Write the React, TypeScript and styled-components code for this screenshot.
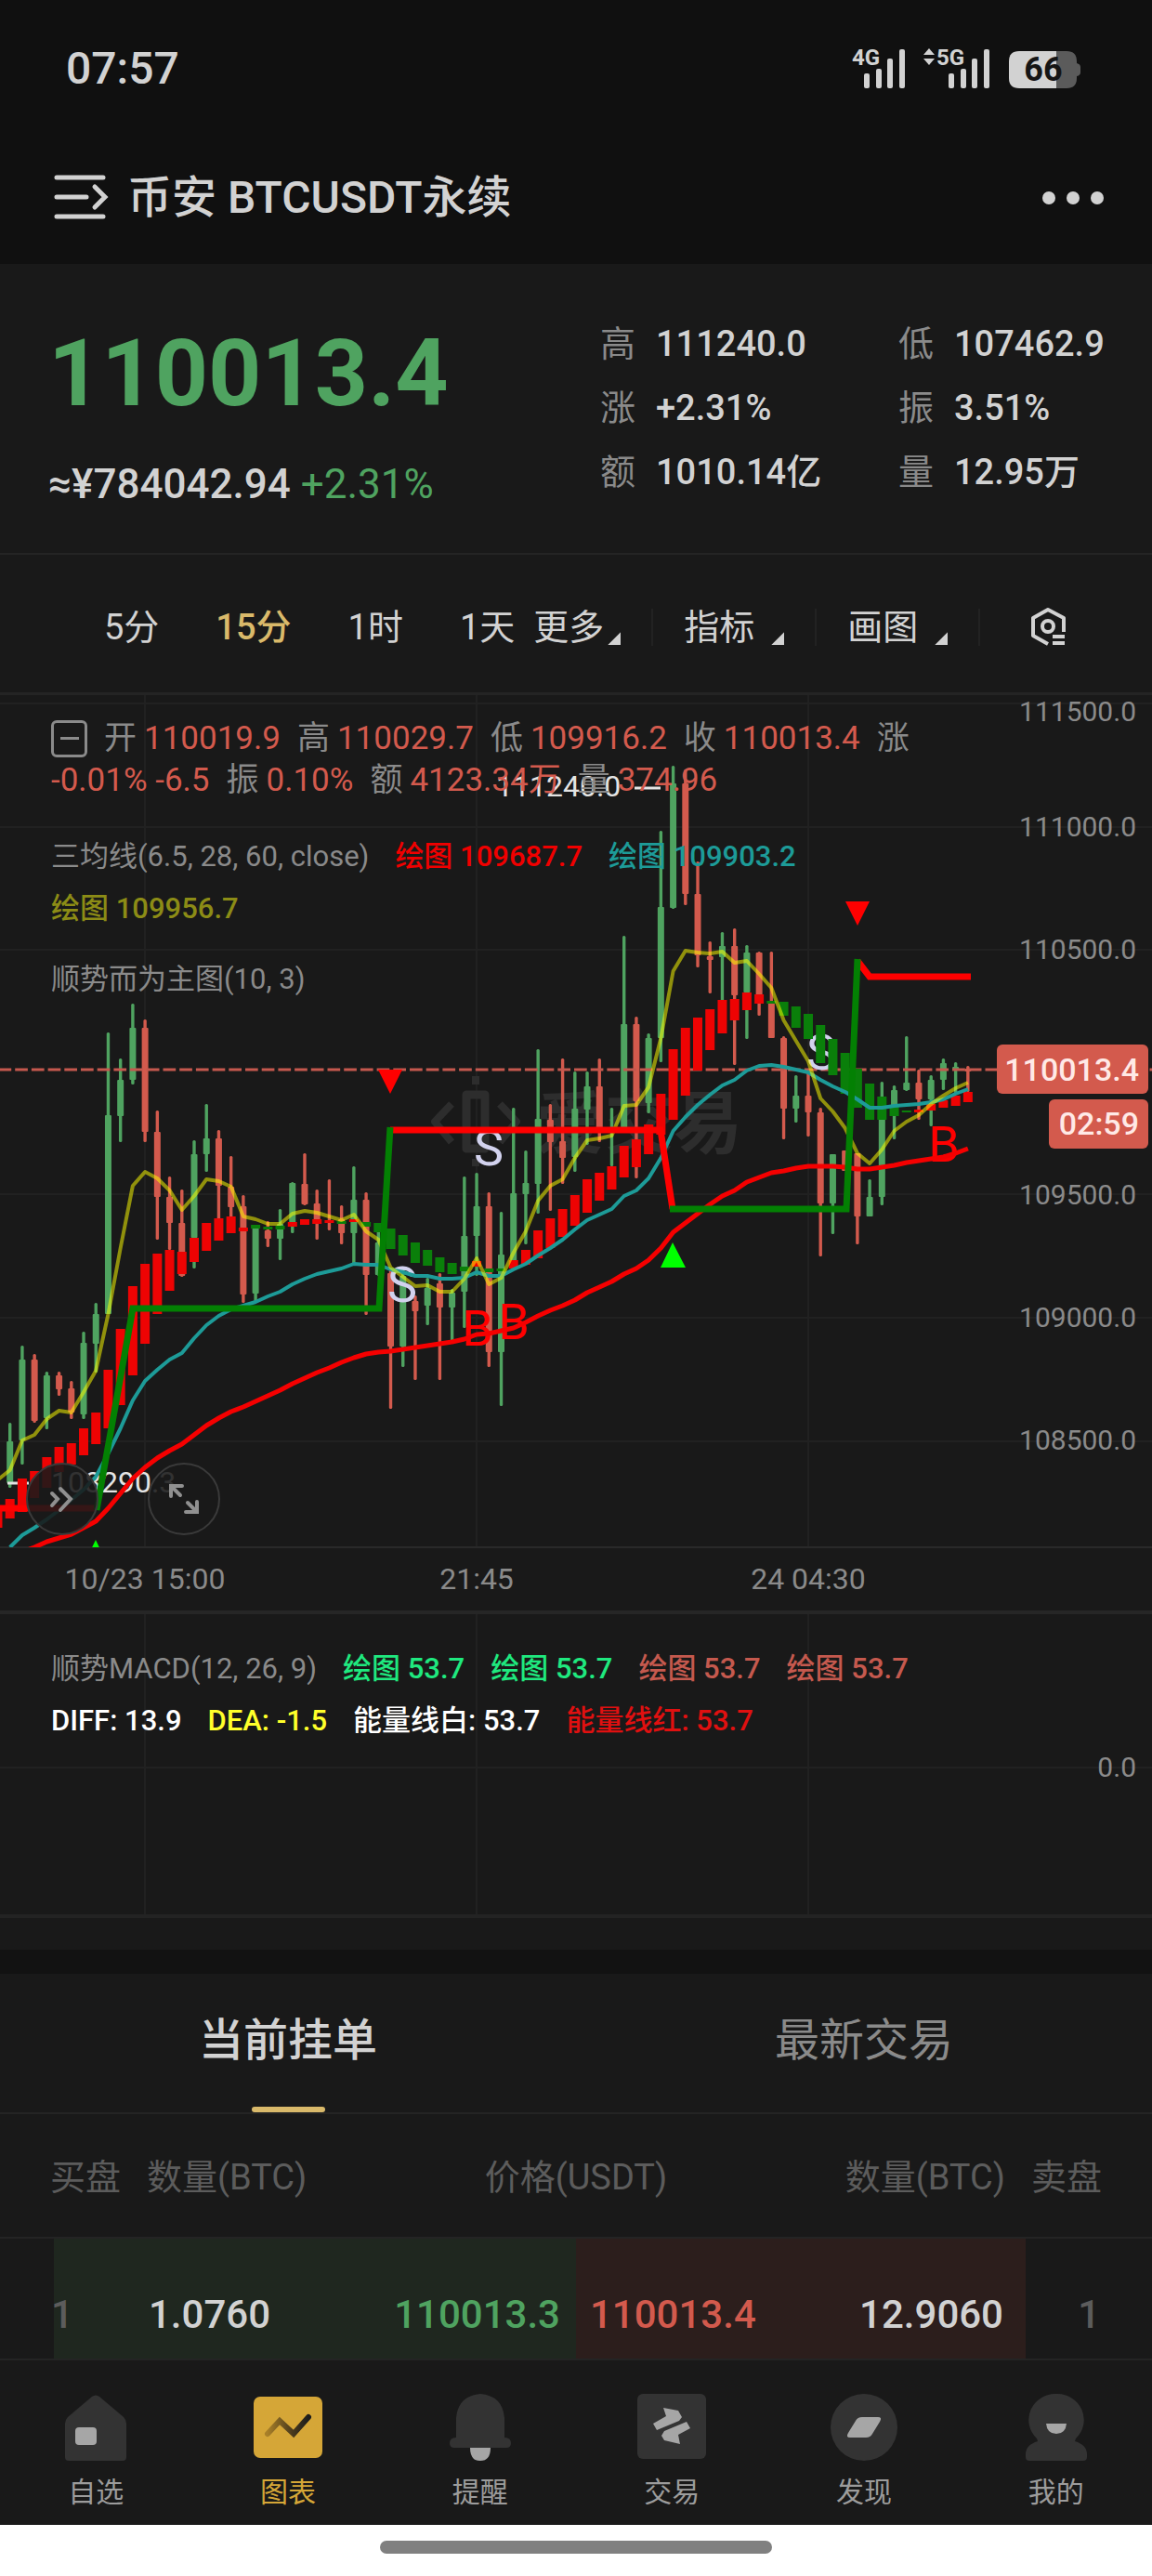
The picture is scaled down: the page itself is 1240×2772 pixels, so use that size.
import React from 'react';
import styled, { createGlobalStyle } from 'styled-components';

const FONT = `Roboto, "Noto Sans CJK SC", sans-serif`;

const C = {
  header: '#101010',
  bg: '#191919',
  strip: '#121212',
  line: '#242424',
  text: '#d2d2d2',
  muted: '#8a8a8a',
  dim: '#5c5c5c',
  up: '#4fa360',
  down: '#d35a4d',
  gold: '#d9b96a',
  teal: '#1d9b98',
  olive: '#8c8c16',
};

const GlobalStyle = createGlobalStyle`
  *, *::before, *::after { box-sizing: border-box; }
  body { margin: 0; background: ${C.bg}; color: ${C.text}; font-family: ${FONT}; }
  button { border: 0; padding: 0; background: none; color: inherit; font: inherit; cursor: pointer; }
  svg { display: block; }
`;

const Page = styled.div`
  display: flex;
  flex-direction: column;
`;

/* ---------- status bar and title ---------- */

const TopArea = styled.header`
  background: ${C.header};
`;

const StatusBar = styled.div`
  display: flex;
  align-items: center;
  justify-content: space-between;
  height: 148px;
  padding: 0 76px 0 71px;
`;

const Clock = styled.time`
  font-size: 48px;
  line-height: 56px;
  font-weight: 500;
`;

const TitleBar = styled.div`
  display: flex;
  align-items: center;
  height: 136px;
  padding: 0 52px 6px 57px;
`;

const Title = styled.h1`
  flex: 1;
  margin: 0 0 0 20px;
  font-size: 48px;
  line-height: 56px;
  font-weight: 500;
`;

/* ---------- ticker ---------- */

const Ticker = styled.section`
  display: grid;
  grid-template-columns: 594px 1fr;
  padding: 52px 52px 44px 52px;
  border-bottom: 2px solid ${C.line};
`;

const LastPrice = styled.div`
  font-size: 100px;
  line-height: 132px;
  font-weight: 700;
  color: ${C.up};
`;

const Converted = styled.div`
  margin-top: 23px;
  font-size: 44px;
  line-height: 60px;
  font-weight: 500;
  white-space: nowrap;
`;

const Up = styled.span`
  color: ${C.up};
  font-weight: 400;
`;

const Stats = styled.dl`
  display: grid;
  grid-template-columns: 321px 1fr;
  align-content: start;
  margin: 0;
  font-size: 38px;
  line-height: 69px;
  white-space: nowrap;
`;

const Stat = styled.div`
  display: flex;
  gap: 22px;
  dt { color: ${C.muted}; }
  dd { margin: 0; font-weight: 500; }
`;

/* ---------- toolbar ---------- */

const Toolbar = styled.nav`
  display: flex;
  align-items: center;
  height: 151px;
  padding: 8px 0 0 112px;
  border-bottom: 3px solid ${C.line};
  font-size: 38px;
  line-height: 56px;
`;

const Intervals = styled.div`
  display: flex;
  gap: 61px;
  margin-right: 20px;
`;

const Interval = styled.button<{ $active?: boolean }>`
  color: ${p => (p.$active ? C.gold : 'inherit')};
  font-weight: ${p => (p.$active ? 500 : 400)};
`;

const MenuButton = styled.button<{ $gap: number }>`
  display: flex;
  align-items: center;
  gap: ${p => p.$gap}px;
`;

const Corner = styled.i`
  width: 14px;
  height: 14px;
  margin-top: 24px;
  background: currentColor;
  clip-path: polygon(100% 0, 100% 100%, 0 100%);
`;

const ToolDivider = styled.i`
  width: 2px;
  height: 40px;
  margin: 0 33px;
  background: #222;
`;

const SettingsButton = styled.button`
  margin-left: 20px;
`;

/* ---------- charts ---------- */

const ChartPanel = styled.section`
  position: relative;
  svg { width: 100%; height: auto; }
`;

const Overlay = styled.div`
  position: absolute;
  top: 24px;
  left: 55px;
  max-width: 960px;
`;

const Ohlc = styled.div`
  display: flex;
  align-items: center;
  column-gap: 18px;
  font-size: 35px;
  line-height: 45px;
  white-space: nowrap;
  color: ${C.down};
  span span { color: ${C.muted}; margin-right: 8px; }
`;

const Collapse = styled.button`
  width: 39px;
  height: 40px;
  border: 3px solid ${C.muted};
  border-radius: 6px;
  display: flex;
  align-items: center;
  justify-content: center;
  &::before { content: ''; width: 20px; height: 3px; background: ${C.muted}; }
`;

const Legend = styled.div<{ $top: number }>`
  display: flex;
  flex-wrap: wrap;
  column-gap: 28px;
  margin-top: ${p => p.$top}px;
  font-size: 31px;
  line-height: 56px;
`;

const Tint = styled.span<{ $c: string; $w?: number }>`
  color: ${p => p.$c};
  font-weight: ${p => p.$w ?? 400};
  white-space: nowrap;
`;

const RoundButton = styled.button<{ $left: number }>`
  position: absolute;
  top: 826px;
  left: ${p => p.$left}px;
  width: 78px;
  height: 78px;
  display: grid;
  place-items: center;
  border: 2px solid #3a3a3a;
  border-radius: 50%;
  background: rgba(25, 25, 25, 0.88);
  svg { width: 40px; height: 40px; }
`;

const MacdPanel = styled(ChartPanel)`
  border-top: 4px solid #262626;
  padding-bottom: 34px;
`;

/* ---------- order book ---------- */

const OrderBook = styled.section`
  border-top: 26px solid ${C.strip};
`;

const Tabs = styled.div`
  display: grid;
  grid-template-columns: 1fr 1fr;
  border-bottom: 2px solid ${C.line};
`;

const Tab = styled.button<{ $active?: boolean }>`
  display: flex;
  flex-direction: column;
  align-items: center;
  justify-content: space-between;
  height: 149px;
  padding-top: 43px;
  font-size: 48px;
  line-height: 58px;
  font-weight: ${p => (p.$active ? 500 : 400)};
  color: ${p => (p.$active ? C.text : C.muted)};
  &::after {
    content: '';
    width: 79px;
    height: 6px;
    border-radius: 3px;
    background: ${p => (p.$active ? C.gold : 'transparent')};
  }
`;

const Book = styled.table`
  width: 100%;
  border-collapse: collapse;
  table-layout: fixed;
  text-align: left;
  th, td { padding: 0; white-space: nowrap; }
  th {
    height: 133px;
    padding-top: 4px;
    border-bottom: 2px solid ${C.line};
    font-size: 38px;
    line-height: 56px;
    font-weight: 400;
    color: ${C.dim};
  }
  td {
    height: 131px;
    padding-top: 34px;
    border-bottom: 2px solid ${C.line};
    font-size: 42px;
    line-height: 56px;
    font-weight: 500;
  }
`;

const Edge = styled.col`width: 158px;`;

const Cell = styled.td<{ $c?: string; $align?: string; $l?: number; $r?: number }>`
  && {
    color: ${p => p.$c ?? C.text};
    text-align: ${p => p.$align ?? 'left'};
    padding-left: ${p => p.$l ?? 0}px;
    padding-right: ${p => p.$r ?? 0}px;
  }
`;

const Head = styled(Cell).attrs({ as: 'th' })``;

const DepthRow = styled.tr<{ $bid: number; $ask: number }>`
  background: linear-gradient(
    90deg,
    transparent ${p => 50 - p.$bid}%,
    #1f271f ${p => 50 - p.$bid}% 50%,
    #2c1e1c 50% ${p => 50 + p.$ask}%,
    transparent ${p => 50 + p.$ask}%
  );
`;

/* ---------- bottom navigation ---------- */

const BottomNav = styled.nav`
  display: grid;
  grid-template-columns: repeat(6, 1fr);
  height: 177px;
  background: ${C.bg};
`;

const NavItem = styled.a<{ $active?: boolean }>`
  display: flex;
  flex-direction: column;
  align-items: center;
  gap: 12px;
  padding-top: 36px;
  font-size: 30px;
  line-height: 44px;
  text-decoration: none;
  color: ${p => (p.$active ? '#d5a637' : '#9c9c9c')};
`;

const HomeBar = styled.footer`
  height: 56px;
  padding-top: 17px;
  background: #fff;
  &::before {
    content: '';
    display: block;
    width: 34%;
    height: 14px;
    margin: 0 auto;
    border-radius: 7px;
    background: #808080;
  }
`;

/* ---------- chart data ---------- */

const STEP = 13.22;
const xAt = (i: number) => 10.7 + STEP * i;

type Candle = [dir: 'g' | 'r', high: number, top: number, bottom: number, low: number];

const CANDLES: Candle[] = [
  ['g', 1531, 1551, 1596, 1601], ['g', 1448, 1463, 1550, 1576], ['r', 1457, 1463, 1529, 1531],
  ['g', 1476, 1480, 1526, 1538], ['r', 1476, 1480, 1495, 1502], ['r', 1486, 1494, 1520, 1527],
  ['g', 1433, 1445, 1522, 1527], ['g', 1402, 1414, 1446, 1477], ['g', 1111, 1200, 1414, 1414],
  ['g', 1139, 1162, 1201, 1229], ['g', 1080, 1106, 1162, 1167], ['r', 1097, 1106, 1218, 1229],
  ['r', 1195, 1218, 1288, 1334], ['r', 1266, 1288, 1316, 1345], ['r', 1280, 1316, 1373, 1374],
  ['g', 1227, 1242, 1332, 1365], ['g', 1188, 1225, 1242, 1261], ['r', 1216, 1225, 1276, 1333],
  ['r', 1244, 1277, 1299, 1327], ['r', 1286, 1298, 1393, 1402], ['g', 1318, 1321, 1392, 1402],
  ['r', 1314, 1324, 1333, 1342], ['g', 1301, 1317, 1333, 1356], ['g', 1272, 1273, 1316, 1327],
  ['r', 1241, 1274, 1296, 1297], ['r', 1280, 1295, 1315, 1334], ['r', 1269, 1313, 1315, 1324],
  ['r', 1297, 1312, 1327, 1339], ['g', 1255, 1291, 1327, 1362], ['r', 1283, 1291, 1372, 1415],
  ['g', 1320, 1337, 1372, 1373], ['r', 1365, 1370, 1449, 1516], ['g', 1365, 1373, 1449, 1471],
  ['r', 1394, 1400, 1411, 1485], ['g', 1375, 1386, 1405, 1426], ['r', 1370, 1381, 1407, 1485],
  ['g', 1387, 1391, 1407, 1443], ['g', 1266, 1330, 1390, 1429], ['g', 1262, 1298, 1330, 1373],
  ['r', 1283, 1298, 1455, 1471], ['g', 1304, 1350, 1455, 1513], ['g', 1192, 1284, 1359, 1359],
  ['g', 1238, 1273, 1285, 1339], ['g', 1129, 1204, 1274, 1306], ['r', 1188, 1205, 1229, 1303],
  ['r', 1139, 1228, 1246, 1274], ['g', 1153, 1193, 1245, 1261], ['g', 1153, 1169, 1194, 1232],
  ['r', 1139, 1169, 1215, 1229], ['g', 1192, 1213, 1219, 1255], ['g', 1007, 1102, 1215, 1216],
  ['r', 1094, 1102, 1185, 1268], ['g', 1112, 1117, 1187, 1198], ['g', 894, 976, 1117, 1143],
  ['g', 824, 843, 977, 978], ['r', 828, 843, 962, 974], ['r', 927, 962, 1028, 1041],
  ['r', 1013, 1029, 1033, 1069], ['g', 1003, 1018, 1030, 1077], ['r', 999, 1018, 1071, 1146],
  ['g', 1017, 1025, 1068, 1118], ['r', 1024, 1025, 1080, 1093], ['r', 1024, 1078, 1117, 1117],
  ['r', 1115, 1117, 1193, 1226], ['g', 1157, 1179, 1193, 1208], ['r', 1153, 1179, 1197, 1223],
  ['r', 1192, 1197, 1295, 1352], ['g', 1242, 1242, 1295, 1328], ['r', 1238, 1238, 1260, 1260],
  ['r', 1241, 1241, 1309, 1339], ['g', 1269, 1288, 1309, 1309], ['g', 1164, 1180, 1288, 1297],
  ['g', 1168, 1173, 1198, 1226], ['g', 1115, 1165, 1173, 1174], ['r', 1151, 1165, 1183, 1205],
  ['g', 1157, 1162, 1183, 1212], ['g', 1139, 1144, 1162, 1173], ['g', 1143, 1148, 1152, 1177],
  ['r', 1147, 1150, 1153, 1175],
];

/* Trend ribbon, first entry sits one step left of the first candle. */
const RIBBON: ['g' | 'r', number, number][] = [
  ['r', 1623, 1644], ['r', 1613, 1634], ['r', 1591, 1627], ['r', 1583, 1612], ['r', 1568, 1601],
  ['r', 1557, 1584], ['r', 1553, 1576], ['r', 1537, 1566], ['r', 1520, 1554], ['r', 1474, 1537],
  ['r', 1430, 1512], ['r', 1384, 1480], ['r', 1360, 1446], ['r', 1349, 1414], ['r', 1345, 1389],
  ['r', 1347, 1371], ['r', 1332, 1358], ['r', 1316, 1346], ['r', 1311, 1335], ['r', 1309, 1327],
  ['r', 1321, 1325], ['g', 1318, 1322], ['g', 1320, 1323], ['g', 1319, 1323], ['r', 1315, 1320],
  ['r', 1312, 1318], ['r', 1312, 1317], ['r', 1313, 1316], ['g', 1314, 1317], ['r', 1312, 1315],
  ['g', 1315, 1320], ['g', 1316, 1326], ['g', 1322, 1344], ['g', 1329, 1351], ['g', 1337, 1359],
  ['g', 1345, 1362], ['g', 1353, 1369], ['g', 1359, 1371], ['g', 1363, 1368], ['r', 1357, 1363],
  ['g', 1365, 1369], ['g', 1365, 1368], ['r', 1356, 1365], ['r', 1345, 1361], ['r', 1324, 1354],
  ['r', 1311, 1343], ['r', 1301, 1331], ['r', 1286, 1319], ['r', 1269, 1305], ['r', 1262, 1292],
  ['r', 1255, 1280], ['r', 1233, 1267], ['r', 1226, 1256], ['r', 1210, 1242], ['r', 1177, 1221],
  ['r', 1129, 1205], ['r', 1106, 1179], ['r', 1095, 1152], ['r', 1086, 1130], ['r', 1076, 1112],
  ['r', 1075, 1098], ['r', 1068, 1087], ['r', 1070, 1080], ['g', 1077, 1080], ['g', 1078, 1093],
  ['g', 1083, 1106], ['g', 1091, 1118], ['g', 1103, 1144], ['g', 1118, 1157], ['g', 1133, 1177],
  ['g', 1150, 1192], ['g', 1166, 1205], ['g', 1180, 1205], ['g', 1189, 1201], ['g', 1195, 1197],
  ['r', 1194, 1197], ['r', 1188, 1195], ['r', 1184, 1192], ['r', 1179, 1190], ['r', 1175, 1186],
];

const FAST = [
  1582, 1550, 1544, 1527, 1518, 1520, 1498, 1475, 1414, 1343, 1276, 1261, 1268, 1281, 1302, 1287,
  1269, 1271, 1277, 1309, 1312, 1317, 1317, 1306, 1303, 1305, 1309, 1313, 1307, 1325, 1334, 1364,
  1374, 1384, 1383, 1390, 1390, 1376, 1354, 1382, 1375, 1348, 1325, 1292, 1276, 1269, 1246, 1227,
  1225, 1222, 1190, 1189, 1170, 1117, 1045, 1023, 1025, 1026, 1024, 1036, 1034, 1048, 1063, 1098,
  1120, 1142, 1182, 1196, 1214, 1241, 1252, 1237, 1217, 1207, 1200, 1188, 1179, 1171, 1165,
];

const MID = [
  1665, 1652, 1644, 1635, 1625, 1614, 1603, 1589, 1564, 1537, 1507, 1486, 1474, 1463, 1456, 1440,
  1426, 1416, 1409, 1405, 1401, 1395, 1390, 1382, 1376, 1371, 1368, 1365, 1360, 1361, 1361, 1366,
  1369, 1373, 1373, 1376, 1376, 1375, 1369, 1373, 1373, 1366, 1360, 1351, 1343, 1334, 1323, 1313,
  1307, 1301, 1287, 1281, 1268, 1246, 1217, 1202, 1189, 1178, 1168, 1162, 1152, 1147, 1146, 1148,
  1151, 1154, 1162, 1169, 1175, 1183, 1192, 1192, 1190, 1189, 1188, 1186, 1183, 1177, 1172,
];

const SLOW = [
  1676, 1670, 1665, 1659, 1655, 1651, 1644, 1637, 1623, 1607, 1591, 1579, 1569, 1561, 1554, 1544,
  1534, 1526, 1519, 1514, 1508, 1502, 1496, 1489, 1483, 1477, 1472, 1466, 1461, 1457, 1455, 1454,
  1452, 1450, 1448, 1446, 1444, 1441, 1436, 1435, 1432, 1429, 1423, 1416, 1410, 1405, 1399, 1391,
  1385, 1379, 1371, 1365, 1356, 1343, 1326, 1316, 1306, 1296, 1287, 1281, 1272, 1267, 1262, 1260,
  1257, 1255, 1255, 1255, 1256, 1258, 1258, 1256, 1254, 1251, 1249, 1247, 1245, 1241, 1236,
];

const points = (ys: number[]) => ys.map((y, i) => `${xAt(i).toFixed(1)},${y}`).join(' ');

const GRID_X = [156, 513, 870];
const PRICE_TICKS: [string, number, number][] = [
  ['111500.0', 757, 765], ['111000.0', 890, 889], ['110500.0', 1022, 1021],
  ['109500.0', 1285, 1285], ['109000.0', 1418, 1417], ['108500.0', 1551, 1549],
];
const TIME_TICKS = ['10/23 15:00', '21:45', '24 04:30'];
const SIGNALS: [string, number, number][] = [
  ['S', 526, 1254], ['S', 433, 1401], ['S', 884, 1151],
  ['B', 514, 1448], ['B', 553, 1441], ['B', 1016, 1250],
];

function PriceChart() {
  return (
    <svg viewBox="0 748 1240 985" fontFamily={FONT} role="img" aria-label="BTCUSDT 15分 K线图">
      <defs>
        <clipPath id="plot"><rect x="0" y="748" width="1240" height="917" /></clipPath>
      </defs>
      <g stroke="#212121" strokeWidth="2">
        {PRICE_TICKS.map(([t, y]) => <line key={t} x1="0" x2="1240" y1={y} y2={y} />)}
        {GRID_X.map(x => <line key={x} x1={x} x2={x} y1="748" y2="1665" />)}
        <line x1="0" x2="1240" y1="1665" y2="1665" stroke="#292929" />
      </g>

      <g stroke="#2d2d2d" strokeWidth="8" fill="none" strokeLinejoin="round">
        <path d="M486 1188 L468 1207 L486 1229 M538 1188 L556 1207 L538 1229" />
        <path d="M502 1236 V1178 H522 V1236 Z" strokeWidth="9" />
        <path d="M512 1158 V1167 M512 1247 V1255" />
      </g>
      <text x="577" y="1235" fontSize="74" fontWeight="700" fill="#2d2d2d">爱交易</text>

      <g clipPath="url(#plot)">
        {CANDLES.map(([dir, high, top, bottom, low], i) => {
          const fill = dir === 'g' ? C.up : C.down;
          return (
            <g key={i} fill={fill}>
              <rect x={xAt(i) - 1.7} y={high} width="3.4" height={low - high} rx="1.5" />
              <rect x={xAt(i) - 3.5} y={top} width="7" height={Math.max(2, bottom - top)} rx="1" />
            </g>
          );
        })}
        <line x1="0" x2="1240" y1="1151" y2="1151" stroke="#c5584e" strokeWidth="3" strokeDasharray="13.7 4" strokeDashoffset="1.5" />
        <g fontSize="54" textAnchor="middle">
          {SIGNALS.map(([t, x, y]) => <text key={x} x={x} y={y} fill={t === 'S' ? '#d2d2ee' : '#f00'}>{t}</text>)}
        </g>
        <g fontSize="32" fill="#e4e4e4">
          <text x="534" y="857">111240.0</text>
          <text x="55" y="1606">108290.3</text>
          <path d="M683 848 H711 M8 1596 H31" stroke="#e4e4e4" strokeWidth="3" />
        </g>
        {RIBBON.map(([dir, top, bottom], i) => (
          <rect key={i} x={xAt(i - 1) - 5} y={top} width="10" height={bottom - top} fill={dir === 'g' ? '#0a7f0a' : '#ee0303'} />
        ))}
        <g fill="none" strokeLinejoin="round">
          <polyline points={points(MID)} stroke={C.teal} strokeWidth="4" />
          <polyline points={'-2,1592 ' + points(FAST)} stroke="#ff0" strokeOpacity="0.52" strokeWidth="4" />
          <polyline points={points(SLOW)} stroke="#f50000" strokeWidth="5" />
        </g>
        <g fill="none" strokeWidth="7">
          <polyline points="0,1623 103,1623" stroke="#f00" />
          <polyline points="420,1216 711,1216 724,1301" stroke="#f00" />
          <polyline points="923,1034 936,1051 1045,1051" stroke="#f00" />
          <polyline points="104,1625 143,1408 408,1408 420,1213" stroke="#038003" />
          <polyline points="721,1301 911,1301 923,1032" stroke="#038003" />
        </g>
        <path d="M407 1151 H433 L420 1177 Z M910 970 H936 L923 996 Z" fill="#f00" />
        <path d="M711 1364 H738 L724 1337 Z M90 1684 H116 L103 1657 Z" fill="#0f0" />
      </g>

      <g fontSize="30" fill={C.muted} textAnchor="end">
        {PRICE_TICKS.map(([t, , y]) => <text key={t} x="1223" y={y + 11}>{t}</text>)}
      </g>
      <g fontSize="32" fill={C.muted} textAnchor="middle">
        {TIME_TICKS.map((t, i) => <text key={t} x={GRID_X[i]} y="1710">{t}</text>)}
      </g>
      <g fill={C.down}>
        <rect x="1073" y="1124" width="163" height="53" rx="6" />
        <rect x="1129" y="1183" width="107" height="53" rx="6" />
      </g>
      <g fontSize="34" fontWeight="500" fill="#ffe9e6" textAnchor="end">
        <text x="1226" y="1163">110013.4</text>
        <text x="1226" y="1221">02:59</text>
      </g>
    </svg>
  );
}

function MacdChart() {
  return (
    <svg viewBox="0 1737 1240 327" fontFamily={FONT} role="img" aria-label="顺势MACD">
      <g stroke="#212121" strokeWidth="2">
        <line x1="0" x2="1240" y1="1902" y2="1902" />
        {GRID_X.map(x => <line key={x} x1={x} x2={x} y1="1737" y2="2060" />)}
        <line x1="0" x2="1240" y1="2062" y2="2062" stroke="#232323" strokeWidth="4" />
      </g>
      <text x="1223" y="1912" fontSize="30" fill={C.muted} textAnchor="end">0.0</text>
    </svg>
  );
}

/* ---------- icons ---------- */

const bars = (x: number) => [0, 13, 25, 38].map((d, i) => (
  <rect key={d} x={x + d} y={[28, 23, 12, 2][i]} width="6" height={[16, 21, 32, 42][i]} rx="2" />
));

function StatusIcons() {
  return (
    <svg width="247" height="62" viewBox="0 -8 247 62" fill={C.text} fontFamily={FONT}>
      <g fontSize="24" fontWeight="700">
        <text x="0" y="19">4G</text>
        <text x="91" y="19">5G</text>
      </g>
      {bars(13)}
      {bars(104)}
      <path d="M83 1 L89 8 H77 Z M83 19 L89 12 H77 Z" />
      <path d="M180 4 H220 V44 H180 Q169 44 169 33 V15 Q169 4 180 4 Z" />
      <path d="M220 4 H231 Q242 4 242 15 V17 Q246 18 246 21 V27 Q246 30 242 31 V33 Q242 44 231 44 H220 Z" fill="#5b5b5b" />
      <text x="206" y="36" fontSize="36" fontWeight="700" fill="#151515" textAnchor="middle">66</text>
    </svg>
  );
}

const MenuIcon = () => (
  <svg width="60" height="50" viewBox="0 0 60 50" fill="none" stroke={C.text} strokeWidth="5" strokeLinecap="round">
    <path d="M4 3 H54 M4 24 H36 M4 45 H54 M45 13 L56 24 L45 35" />
  </svg>
);

const DotsIcon = () => (
  <svg width="66" height="16" viewBox="0 0 66 16" fill={C.text}>
    <circle cx="7" cy="8" r="7" /><circle cx="33" cy="8" r="7" /><circle cx="59" cy="8" r="7" />
  </svg>
);

const HexIcon = () => (
  <svg width="42" height="44" viewBox="0 0 42 44" fill="none" stroke={C.text} strokeWidth="4">
    <path d="M37 27 V12 L20 3 L4 12 V31 L20 40" strokeLinejoin="round" />
    <circle cx="20" cy="21" r="6" />
    <path d="M25 32 H38 M25 39 H38" />
  </svg>
);

const ICON_BG = '#333';
const ICON_FG = '#a6a6a6';

const NAV: { label: string; active?: boolean; icon: React.ReactNode }[] = [
  {
    label: '自选',
    icon: <>
      <path d="M5 32 Q5 28 8 25 L34 3 Q38 0 42 3 L68 25 Q71 28 71 32 V68 Q71 72 67 72 H9 Q5 72 5 68 Z" fill={ICON_BG} />
      <rect x="16" y="36" width="23" height="19" rx="4" fill={ICON_FG} />
    </>,
  },
  {
    label: '图表',
    active: true,
    icon: <>
      <defs>
        <linearGradient id="trend" x1="0" x2="1">
          <stop offset="0" stopColor="#a87f28" /><stop offset="0.6" stopColor="#4a3a1c" /><stop offset="1" stopColor="#1c1c1c" />
        </linearGradient>
      </defs>
      <rect x="1" y="3" width="74" height="66" rx="7" fill="#d5a637" />
      <path d="M16 43 L29 29 L44 43 L60 25" fill="none" stroke="url(#trend)" strokeWidth="6" strokeLinecap="round" />
    </>,
  },
  {
    label: '提醒',
    icon: <>
      <path d="M12 47 V26 Q14 2 38 0 Q62 2 64 26 V47 Q71 47 71 53 Q71 58 66 58 H10 Q5 58 5 53 Q5 47 12 47 Z" fill={ICON_BG} />
      <path d="M27 58 H49 Q49 72 38 72 Q27 72 27 58 Z" fill={ICON_FG} />
    </>,
  },
  {
    label: '交易',
    icon: <>
      <rect x="1" y="0" width="74" height="70" rx="6" fill={ICON_BG} />
      <path d="M22 39 L18 32 L32 24 L29 15 L45 18 L49 25 L46 29 Z M54 30 L58 37 L45 44 L47 54 L30 50 L27 45 L30 40 Z" fill={ICON_FG} />
    </>,
  },
  {
    label: '发现',
    icon: <>
      <circle cx="38" cy="36" r="36" fill={ICON_BG} />
      <path d="M36 25 H53 Q58 25 55 30 L47 43 Q45 47 40 47 H23 Q18 47 21 42 L29 29 Q31 25 36 25 Z" fill={ICON_FG} />
    </>,
  },
  {
    label: '我的',
    icon: <>
      <path d="M38 0 A29 28 0 0 1 59 48 L58 51 Q71 55 71 65 V68 Q71 72 67 72 H9 Q5 72 5 68 V65 Q5 55 18 51 L17 48 A29 28 0 0 1 38 0 Z" fill={ICON_BG} />
      <path d="M27 32 H49 Q48 43 38 43 Q28 43 27 32 Z" fill={ICON_FG} />
    </>,
  },
];

const STATS = [
  ['高', '111240.0'], ['低', '107462.9'],
  ['涨', '+2.31%'], ['振', '3.51%'],
  ['额', '1010.14亿'], ['量', '12.95万'],
];

export default function App() {
  return (
    <Page>
      <GlobalStyle />
      <TopArea>
        <StatusBar>
          <Clock>07:57</Clock>
          <StatusIcons />
        </StatusBar>
        <TitleBar>
          <button aria-label="菜单"><MenuIcon /></button>
          <Title>币安 BTCUSDT永续</Title>
          <button aria-label="更多"><DotsIcon /></button>
        </TitleBar>
      </TopArea>

      <Ticker>
        <div>
          <LastPrice>110013.4</LastPrice>
          <Converted>≈¥784042.94 <Up>+2.31%</Up></Converted>
        </div>
        <Stats>
          {STATS.map(([k, v]) => <Stat key={k}><dt>{k}</dt><dd>{v}</dd></Stat>)}
        </Stats>
      </Ticker>

      <Toolbar>
        <Intervals>
          <Interval>5分</Interval>
          <Interval $active>15分</Interval>
          <Interval>1时</Interval>
          <Interval>1天</Interval>
        </Intervals>
        <MenuButton $gap={4}>更多<Corner /></MenuButton>
        <ToolDivider />
        <MenuButton $gap={18}>指标<Corner /></MenuButton>
        <ToolDivider />
        <MenuButton $gap={18}>画图<Corner /></MenuButton>
        <ToolDivider />
        <SettingsButton aria-label="设置"><HexIcon /></SettingsButton>
      </Toolbar>

      <ChartPanel>
        <PriceChart />
        <Overlay>
          <Ohlc>
            <Collapse aria-label="收起" />
            <span><span>开</span>110019.9</span>
            <span><span>高</span>110029.7</span>
            <span><span>低</span>109916.2</span>
            <span><span>收</span>110013.4</span>
            <Tint $c={C.muted}>涨</Tint>
          </Ohlc>
          <Ohlc>
            <span>-0.01% -6.5</span>
            <span><span>振</span>0.10%</span>
            <span><span>额</span>4123.34万</span>
            <span><span>量</span>374.96</span>
          </Ohlc>
          <Legend $top={32}>
            <Tint $c={C.muted}>三均线(6.5, 28, 60, close)</Tint>
            <Tint $c="#f00000" $w={500}>绘图 109687.7</Tint>
            <Tint $c={C.teal} $w={500}>绘图 109903.2</Tint>
            <Tint $c={C.olive} $w={500}>绘图 109956.7</Tint>
          </Legend>
          <Legend $top={20}>
            <Tint $c={C.muted}>顺势而为主图(10, 3)</Tint>
          </Legend>
        </Overlay>
        <RoundButton $left={28} aria-label="展开工具">
          <svg viewBox="0 0 40 40" fill="none" stroke="#909090" strokeWidth="4" strokeLinecap="round">
            <path d="M9 14 L15 20 L9 27 M18 9 L29 20 L18 32" />
          </svg>
        </RoundButton>
        <RoundButton $left={159} aria-label="全屏">
          <svg viewBox="0 0 40 40" fill="none" stroke="#909090" strokeWidth="4" strokeLinecap="round">
            <path d="M6 17 V6 H18 M7 7 L16 16 M34 23 V34 H22 M33 33 L24 24" />
          </svg>
        </RoundButton>
      </ChartPanel>

      <MacdPanel>
        <MacdChart />
        <Overlay>
          <Legend $top={7}>
            <Tint $c={C.muted}>顺势MACD(12, 26, 9)</Tint>
            <Tint $c="#1fe97f" $w={500}>绘图 53.7</Tint>
            <Tint $c="#1fe97f" $w={500}>绘图 53.7</Tint>
            <Tint $c="#c5594e" $w={500}>绘图 53.7</Tint>
            <Tint $c="#c5594e" $w={500}>绘图 53.7</Tint>
          </Legend>
          <Legend $top={0}>
            <Tint $c="#fff" $w={500}>DIFF: 13.9</Tint>
            <Tint $c="#ffff2a" $w={500}>DEA: -1.5</Tint>
            <Tint $c="#fff" $w={500}>能量线白: 53.7</Tint>
            <Tint $c="#e01010" $w={500}>能量线红: 53.7</Tint>
          </Legend>
        </Overlay>
      </MacdPanel>

      <OrderBook>
        <Tabs>
          <Tab $active>当前挂单</Tab>
          <Tab>最新交易</Tab>
        </Tabs>
        <Book>
          <colgroup>
            <Edge /><col /><col /><col /><col /><Edge />
          </colgroup>
          <thead>
            <tr>
              <Head $c={C.dim} $l={54}>买盘</Head>
              <Head $c={C.dim}>数量(BTC)</Head>
              <Head $c={C.dim} $align="center" colSpan={2}>价格(USDT)</Head>
              <Head $c={C.dim} $align="right">数量(BTC)</Head>
              <Head $c={C.dim} $align="right" $r={54}>卖盘</Head>
            </tr>
          </thead>
          <tbody>
            <DepthRow $bid={45.3} $ask={39}>
              <Cell $c={C.dim} $l={55}>1</Cell>
              <Cell $l={2}>1.0760</Cell>
              <Cell $c={C.up} $align="right" $r={17}>110013.3</Cell>
              <Cell $c={C.down} $l={15}>110013.4</Cell>
              <Cell $align="right" $r={2}>12.9060</Cell>
              <Cell $c={C.dim} $align="right" $r={56}>1</Cell>
            </DepthRow>
          </tbody>
        </Book>
      </OrderBook>

      <BottomNav>
        {NAV.map(({ label, active, icon }) => (
          <NavItem key={label} href="#" $active={active}>
            <svg width="76" height="72" viewBox="0 0 76 72">{icon}</svg>
            {label}
          </NavItem>
        ))}
      </BottomNav>
      <HomeBar />
    </Page>
  );
}
